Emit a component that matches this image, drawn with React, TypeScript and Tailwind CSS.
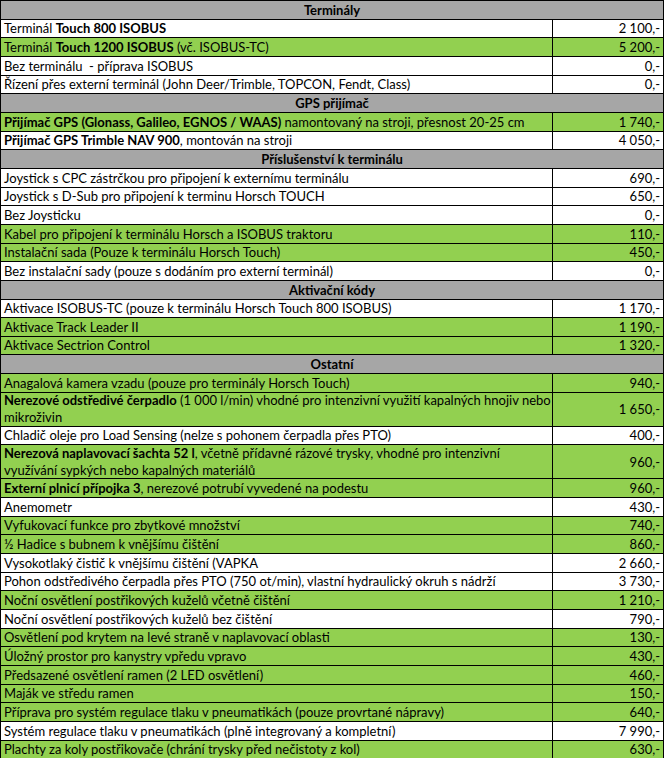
import React from 'react';

type Row =
  | { kind: 'head'; title: string }
  | { kind: 'item'; text: React.ReactNode; price: string; green?: boolean; tall?: boolean };

const rows: Row[] = [
  { kind: 'head', title: 'Terminály' },
  { kind: 'item', text: <>Terminál <b>Touch 800 ISOBUS</b></>, price: '2 100,-' },
  { kind: 'item', text: <>Terminál <b>Touch 1200 ISOBUS</b> (vč. ISOBUS-TC)</>, price: '5 200,-', green: true },
  { kind: 'item', text: 'Bez terminálu  - příprava ISOBUS', price: '0,-' },
  { kind: 'item', text: 'Řízení přes externí terminál (John Deer/Trimble, TOPCON, Fendt, Class)', price: '0,-' },
  { kind: 'head', title: 'GPS přijímač' },
  { kind: 'item', text: <><b>Přijímač GPS (Glonass, Galileo, EGNOS / WAAS)</b> namontovaný na stroji, přesnost 20-25 cm</>, price: '1 740,-', green: true },
  { kind: 'item', text: <><b>Přijímač GPS Trimble NAV 900</b>, montován na stroji</>, price: '4 050,-' },
  { kind: 'head', title: 'Příslušenství k terminálu' },
  { kind: 'item', text: 'Joystick s CPC zástrčkou pro připojení k externímu terminálu', price: '690,-' },
  { kind: 'item', text: 'Joystick s D-Sub pro připojení k terminu Horsch TOUCH', price: '650,-' },
  { kind: 'item', text: 'Bez Joysticku', price: '0,-' },
  { kind: 'item', text: 'Kabel pro připojení k terminálu Horsch a ISOBUS traktoru', price: '110,-', green: true },
  { kind: 'item', text: 'Instalační sada (Pouze k terminálu Horsch Touch)', price: '450,-', green: true },
  { kind: 'item', text: 'Bez instalační sady (pouze s dodáním pro externí terminál)', price: '0,-' },
  { kind: 'head', title: 'Aktivační kódy' },
  { kind: 'item', text: 'Aktivace ISOBUS-TC (pouze k terminálu Horsch Touch 800 ISOBUS)', price: '1 170,-' },
  { kind: 'item', text: 'Aktivace Track Leader II', price: '1 190,-', green: true },
  { kind: 'item', text: 'Aktivace Sectrion Control', price: '1 320,-', green: true },
  { kind: 'head', title: 'Ostatní' },
  { kind: 'item', text: 'Anagalová kamera vzadu (pouze pro terminály Horsch Touch)', price: '940,-', green: true },
  { kind: 'item', text: <><b>Nerezové odstředivé čerpadlo</b> (1 000 l/min) vhodné pro intenzivní využití kapalných hnojiv nebo<br />mikroživin</>, price: '1 650,-', green: true, tall: true },
  { kind: 'item', text: 'Chladič oleje pro Load Sensing (nelze s pohonem čerpadla přes PTO)', price: '400,-' },
  { kind: 'item', text: <><b>Nerezová naplavovací šachta 52 l</b>, včetně přídavné rázové trysky, vhodné pro intenzivní<br />využívání sypkých nebo kapalných materiálů</>, price: '960,-', green: true, tall: true },
  { kind: 'item', text: <><b>Externí plnicí přípojka 3</b>, nerezové potrubí vyvedené na podestu</>, price: '960,-', green: true },
  { kind: 'item', text: 'Anemometr', price: '430,-' },
  { kind: 'item', text: 'Vyfukovací funkce pro zbytkové množství', price: '740,-', green: true },
  { kind: 'item', text: '½ Hadice s bubnem k vnějšímu čištění', price: '860,-', green: true },
  { kind: 'item', text: 'Vysokotlaký čistič k vnějšímu čištění (VAPKA', price: '2 660,-' },
  { kind: 'item', text: 'Pohon odstředivého čerpadla přes PTO (750 ot/min), vlastní hydraulický okruh s nádrží', price: '3 730,-' },
  { kind: 'item', text: 'Noční osvětlení postřikových kuželů včetně čištění', price: '1 210,-', green: true },
  { kind: 'item', text: 'Noční osvětlení postřikových kuželů bez čištění', price: '790,-' },
  { kind: 'item', text: 'Osvětlení pod krytem na levé straně v naplavovací oblasti', price: '130,-', green: true },
  { kind: 'item', text: 'Úložný prostor pro kanystry vpředu vpravo', price: '430,-', green: true },
  { kind: 'item', text: 'Předsazené osvětlení ramen (2 LED osvětlení)', price: '460,-', green: true },
  { kind: 'item', text: 'Maják ve středu ramen', price: '150,-', green: true },
  { kind: 'item', text: 'Příprava pro systém regulace tlaku v pneumatikách (pouze provrtané nápravy)', price: '640,-', green: true },
  { kind: 'item', text: 'Systém regulace tlaku v pneumatikách (plně integrovaný a kompletní)', price: '7 990,-' },
  { kind: 'item', text: 'Plachty za koly postřikovače (chrání trysky před nečistoty z kol)', price: '630,-', green: true },
];

export default function App() {
  return (
    <div className="w-[666px] h-[758px] overflow-hidden bg-white text-black text-[13px] leading-[16px] font-['Lato','Liberation_Sans',sans-serif]">
      <div className="w-[664px] border-t border-l border-black">
        {rows.map((r, i) =>
          r.kind === 'head' ? (
            <div
              key={i}
              className="h-[18.67px] flex items-end justify-center pb-[1px] bg-[#a6a6a6] border-b border-r border-black font-bold"
            >
              {r.title}
            </div>
          ) : (
            <div
              key={i}
              className={`flex ${r.tall ? 'h-[34px]' : 'h-[18.67px]'} ${r.green ? 'bg-[#92d050]' : 'bg-white'} border-b border-black`}
            >
              <div className={`w-[552px] shrink-0 overflow-hidden pl-[3px] flex ${r.tall ? 'items-center leading-[17px]' : 'items-end pb-[1px]'} border-r border-black whitespace-pre`}>
                <span>{r.text}</span>
              </div>
              <div className={`flex-1 px-[3px] flex justify-end ${r.tall ? 'items-center' : 'items-end pb-[1px]'} border-r border-black`}>
                {r.price}
              </div>
            </div>
          )
        )}
      </div>
    </div>
  );
}
